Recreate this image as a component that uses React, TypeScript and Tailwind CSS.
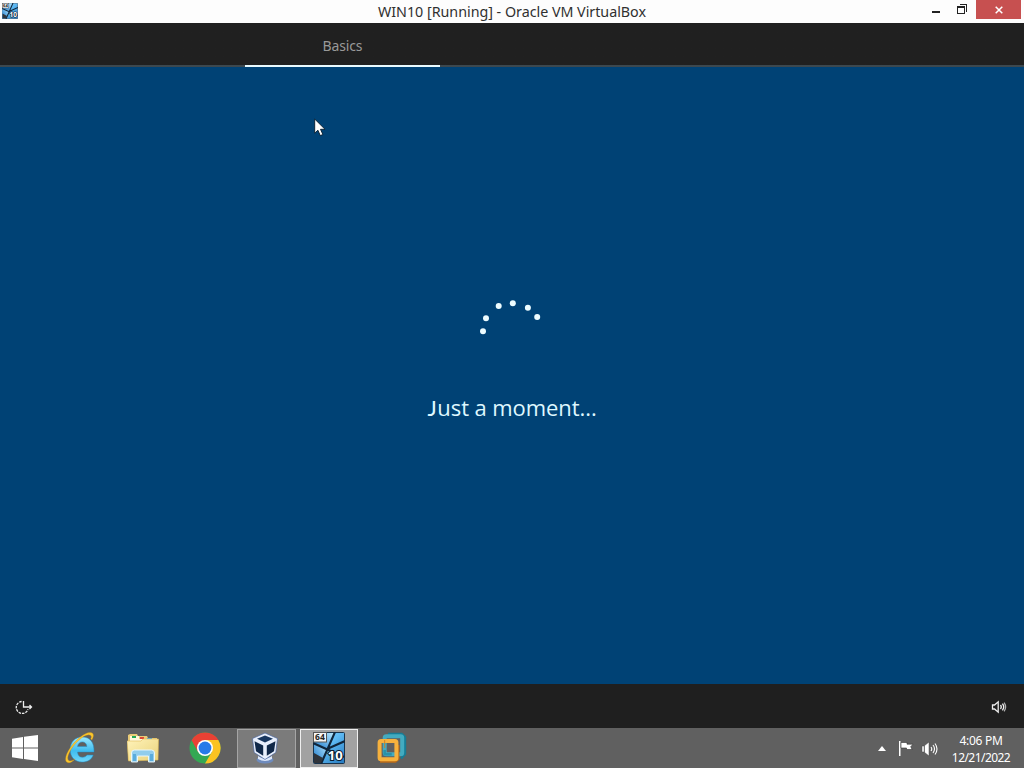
import React from "react";

const uiFont = "font-['Noto_Sans','Open_Sans',sans-serif]";

function VmTile({ className }: { className: string }) {
  return (
    <svg viewBox="0 0 32 32" className={className}>
      <defs>
        <linearGradient id="vmtile" x1="0" y1="0" x2="1" y2="1">
          <stop offset="0" stopColor="#8ad6ff" />
          <stop offset="0.45" stopColor="#5fbbf5" />
          <stop offset="1" stopColor="#2478bd" />
        </linearGradient>
        <linearGradient id="vmpane" x1="0" y1="1" x2="1" y2="0">
          <stop offset="0" stopColor="#1878cc" />
          <stop offset="1" stopColor="#b8e8ff" />
        </linearGradient>
      </defs>
      <rect x="0.5" y="0.5" width="31" height="31" rx="1" fill="url(#vmtile)" stroke="#18334c" />
      <path d="M13 1h8l-7 16-13-6v-1h12Z" fill="url(#vmpane)" />
      <path d="M1 11 14 17 8 31H1Z" fill="url(#vmpane)" />
      <path d="M0 11 31 25M22 0 8 32M14 17 32 9" stroke="#10263c" strokeWidth="2.1" fill="none" />
      <path d="M1 21 10 26 8 31H1Z" fill="#30343a" />
      <rect x="0.5" y="0.5" width="13" height="9.5" fill="#f6f6f6" stroke="#555" />
      <text x="6.9" y="8.3" fontSize="8.5" fontWeight="700" fontFamily="Noto Sans, sans-serif" textAnchor="middle" fill="#222">64</text>
      <text x="22.3" y="27.5" fontSize="13" fontWeight="700" fontFamily="Noto Sans, sans-serif" textAnchor="middle" fill="#fff" stroke="#0a2036" strokeWidth="2.2" paintOrder="stroke">10</text>
    </svg>
  );
}

function TitleBar() {
  return (
    <header className="grid h-[23px] shrink-0 grid-cols-[200px_1fr_200px] bg-[#fdfdfd]">
      <div className="pl-[2px] pt-[3px]">
        <VmTile className="size-4" />
      </div>
      <h1 className="whitespace-nowrap pt-[2px] text-center text-[14.3px] leading-[20px] font-normal tracking-[-0.02px] text-[#303030]">
        WIN10 [Running] - Oracle VM VirtualBox
      </h1>
      <div className="flex justify-end pr-[3px]">
        <svg viewBox="0 0 46 20" className="h-5 w-[46px]" shapeRendering="crispEdges">
          <path d="M2 11h8v2H2z" fill="#222" />
          <path d="M27.5 6.5h7v7h-7zM27 7.5h8" fill="none" stroke="#222" />
          <path d="M30 4.5h6.5V12" fill="none" stroke="#222" />
        </svg>
        <button className="flex h-[19px] w-[45px] items-center justify-center bg-[#c75050]" aria-label="Close">
          <svg viewBox="0 0 8 8" className="size-2">
            <path d="m.7.7 6.6 6.6m0-6.6L.7 7.3" stroke="#fff" strokeWidth="1.5" />
          </svg>
        </button>
      </div>
    </header>
  );
}

function Spinner() {
  const dots = [[483, 331.2], [486, 318.3], [498.7, 306], [512.8, 303.2], [527.9, 307.7], [537.2, 317]];
  return (
    <svg viewBox="480 299 62 62" className="size-[62px]">
      {dots.map(([x, y]) => (
        <circle key={x} cx={x} cy={y} r="3" fill="#edfcff" />
      ))}
    </svg>
  );
}

function Guest() {
  return (
    <main className="flex min-h-0 flex-1 flex-col bg-[#004275]">
      <nav className="h-[44px] shrink-0 bg-linear-to-b from-[#202020] from-[42px] to-[#3c484f] to-[42px] pl-[245px]">
        <div className="h-[44px] w-[195px] border-b-2 border-[#e8faff] pt-[12px] text-center text-[14px] leading-[21px] tracking-[-0.15px] text-[#999]">
          Basics
        </div>
      </nav>
      <section className="relative flex flex-1 flex-col items-center pt-[232px] pr-[2px]">
        <Spinner />
        <p className="pt-[29px] pl-[2px] text-[22px] leading-[34px] tracking-[-0.08px] whitespace-nowrap text-[#dff8ff] font-['Open_Sans','Noto_Sans',sans-serif]">
          <span className="font-['Lato','Open_Sans',sans-serif] tracking-[0.6px]">J</span>ust a moment...
        </p>
        <svg viewBox="0 0 13 19" className="absolute top-[51px] left-[314px] h-[19px] w-[13px]">
          <path d="M.7 1v14.2l3.2-3 2.4 5.4 2.6-1.1-2.4-5.2H11Z" fill="#fff" stroke="#071c2c" strokeWidth=".9" />
        </svg>
      </section>
      <footer className="flex h-[44px] shrink-0 items-center justify-between bg-[#1f1f1f] pt-px pr-[17px] pl-[15px]">
        <svg viewBox="0 0 18 16" className="h-4 w-[18px]" fill="none" stroke="#ededed" strokeWidth="1.3">
          <path d="M6.6 2.5A6 6 0 1 0 13 10.2" strokeDasharray="2.5 1" />
          <path d="M8.5 2v6h8M14.5 6l2 2-2 2" />
        </svg>
        <svg viewBox="0 0 16 16" className="size-4" fill="none" stroke="#eee" strokeWidth="1.3">
          <path d="M1.5 6h2l3.7-3.2v10.4L3.5 10h-2Z" />
          <path d="M9.5 6q1.6 2 0 4M11.4 4.7q2.6 3.3 0 6.6" />
          <path d="M13.1 3.6q3 4.4 0 8.8" strokeOpacity=".7" />
        </svg>
      </footer>
    </main>
  );
}

function StartIcon() {
  return (
    <svg viewBox="0 0 26 26" className="h-[26px] w-[26px]" fill="#fff">
      <path d="M0 3.7 11 2v10.4H0ZM12 1.8 26 0v12.4H12ZM0 13.4h11V24L0 22.2ZM12 13.4h14V26l-14-1.9Z" />
    </svg>
  );
}

function IeIcon() {
  return (
    <svg viewBox="0 0 32 32" className="size-8">
      <defs>
        <linearGradient id="ie" x1="0" y1="0" x2="0" y2="1">
          <stop stopColor="#9be9ff" />
          <stop offset=".55" stopColor="#3fbdf0" />
          <stop offset="1" stopColor="#6fd6fa" />
        </linearGradient>
      </defs>
      <path fillRule="evenodd" d="M29 20H12.5c.3 3.5 2 5.2 5 5.2 2.2 0 3.5-.8 4.4-2.2h6.3C26.6 27.8 22.7 30 17 30 9.8 30 5.2 25.2 5.2 17.6S10 5 17.3 5C25 5 29.5 10.5 29 20ZM12.5 14.5h9.4c-.3-3-2-4.6-4.6-4.6s-4.3 1.7-4.8 4.6Z" fill="url(#ie)" stroke="#238bc5" strokeWidth=".5" />
      <path d="M25.7 6.8c1.1-2.1.7-3.7-1.4-3.9C18.5 2.3 8.7 12 4.5 20.2c-2.9 5.7-2.2 9.6 1.8 8.6 1.2-.3 2.5-.9 3.8-1.9-3.4 3.5-6.8 4.9-8.5 3.2-2.3-2.3-.6-8.4 4.4-15.3C11.8 6.8 19.7.9 24.7.6c4-.3 4.8 2.7 2.2 7.4Z" fill="#fbc72d" stroke="#c58b18" strokeWidth=".35" />
    </svg>
  );
}

function FolderIcon() {
  return (
    <svg viewBox="0 0 32 30" className="h-[30px] w-8">
      <defs>
        <linearGradient id="folder" x1="0" y1="0" x2="1" y2="1">
          <stop stopColor="#fff3ba" />
          <stop offset="1" stopColor="#e9d27a" />
        </linearGradient>
      </defs>
      <path d="M1 5V2l2-1h7l1 2h9l1 2h9v22H1Z" fill="#e9cb77" />
      <path d="M3 3h9v3h7v2h8v5H3Z" fill="#fff9db" />
      <path d="M5 3h4v2H5z" fill="#23a955" />
      <path d="M13 4h4v2h-4z" fill="#dc4935" />
      <path d="M20 5h5v2h-5z" fill="#47a4df" />
      <path d="M0 8h14l2-2h15.5L31 27 1.5 28Z" fill="url(#folder)" stroke="#dfbb58" strokeWidth=".6" />
      <path d="M4.5 29v-9q0-3 3-3h17q3 0 3 3v9h-6v-6h-11v6Z" fill="#91cdec" stroke="#edfaff" strokeWidth=".9" />
      <path d="M6 21h3v7H6m17-7h3v7h-3" fill="#5bacdc" />
    </svg>
  );
}

function ChromeIcon() {
  return (
    <svg viewBox="0 0 32 32" className="size-8">
      <circle cx="16" cy="16" r="15.5" fill="#34a853" />
      <path d="M16 8h13.3A15.5 15.5 0 0 1 16 31.5L22.8 20Z" fill="#fbc322" />
      <path d="M16 .5A15.5 15.5 0 0 0 2.6 8.2L9.1 20 16 8h13.4A15.5 15.5 0 0 0 16 .5Z" fill="#e94134" />
      <circle cx="16" cy="16" r="8" fill="#fff" />
      <circle cx="16" cy="16" r="6.4" fill="#267ae9" />
    </svg>
  );
}

function BoxIcon() {
  return (
    <svg viewBox="0 0 32 32" className="size-8">
      <ellipse cx="16" cy="28" rx="8.5" ry="3.4" fill="#6e8bbd" />
      <path d="M9 24q7 5 14 0v3q-7 4-14 0Z" fill="#dce7fa" />
      <path d="m16 1 12.5 5.5-1.7 14L16 27.5 5.2 20.5 3.5 6.5Z" fill="#e8effc" stroke="#4c679e" strokeWidth=".7" />
      <path d="m16 3.4 8 3.4L16 10.6 8 6.8Z" fill="#17365f" />
      <path d="m5.5 9.3 8.7 4.3v10.2l-7.2-4.6ZM26.5 9.3l-8.7 4.3v10.2l7.2-4.6Z" fill="#102849" />
    </svg>
  );
}

function VmwareIcon() {
  return (
    <svg viewBox="0 0 32 32" className="size-8" fill="none">
      <path d="M13 2h14l3 3v17l-4 4.5" stroke="#177d96" strokeWidth="2.4" strokeLinejoin="round" />
      <rect x="9.7" y="4.3" width="17.5" height="18" rx="1.5" stroke="#43abc0" strokeWidth="4" />
      <path d="M5 29.8h15.5l3-2.5V13" stroke="#b96b18" strokeWidth="1.8" />
      <rect x="4.6" y="9" width="16.8" height="18.2" rx="1.5" stroke="#f6b13d" strokeWidth="4" />
      <path d="M9.7 16V8" stroke="#c98125" strokeWidth="1" />
      <path d="M9.7 18v4.3h7" stroke="#2991a9" strokeWidth="2.5" />
    </svg>
  );
}

function Taskbar() {
  return (
    <footer className="flex h-10 shrink-0 items-center bg-[#606060] text-white">
      <div className="flex w-[50px] pl-3"><StartIcon /></div>
      <div className="flex w-[62px] justify-center"><IeIcon /></div>
      <div className="flex w-[62px] justify-center"><FolderIcon /></div>
      <div className="flex w-[63px] justify-center pr-[2px]"><ChromeIcon /></div>
      <div className="mr-[4px] flex h-[39px] w-[59px] items-center justify-center border border-[#a5a5a5] bg-[#7b7b7b] pr-[4px]"><BoxIcon /></div>
      <div className="flex h-[39px] w-[58px] items-center justify-center border border-[#efefef] bg-[#a2a2a2]"><VmTile className="size-8" /></div>
      <div className="flex w-[66px] justify-center"><VmwareIcon /></div>
      <div className="ml-auto flex h-full items-center">
        <svg viewBox="0 0 8 5" className="mr-[12px] mt-px h-[5px] w-2"><path d="M0 5 4 0l4 5Z" fill="#fff" /></svg>
        <svg viewBox="0 0 17 17" className="mr-[6px] size-[17px]">
          <path d="M1 1h1.5v15H1z" fill="#fff" />
          <path d="M3 2.5h6v1.7h6l-2.3 2.5 1.4 2.8H8.5V8H3Z" fill="#fff" stroke="#343434" strokeWidth=".6" />
        </svg>
        <svg viewBox="0 0 18 16" className="mr-[10px] mt-px h-4 w-[18px]" fill="none" stroke="#fff">
          <path d="M1 5h2l5-4v14l-5-4H1Z" fill="#fff" stroke="#444" strokeWidth=".5" />
          <path d="M3.3 4.5v7" stroke="#555" />
          <path d="M10 6q1.5 2 0 4M12 4q3 4 0 8M14 2.5q4 5.5 0 11" strokeWidth="1.1" />
        </svg>
        <div className="mr-[11px] w-[64px] pt-px text-center text-[12px] leading-[17px] tracking-[-0.55px] whitespace-nowrap">
          <div className="tracking-[-0.3px]">4:06 PM</div>
          <div>12/21/2022</div>
        </div>
      </div>
    </footer>
  );
}

export default function App() {
  return (
    <div className={`flex h-screen min-h-[768px] w-full flex-col overflow-hidden ${uiFont}`}>
      <TitleBar />
      <Guest />
      <Taskbar />
    </div>
  );
}
